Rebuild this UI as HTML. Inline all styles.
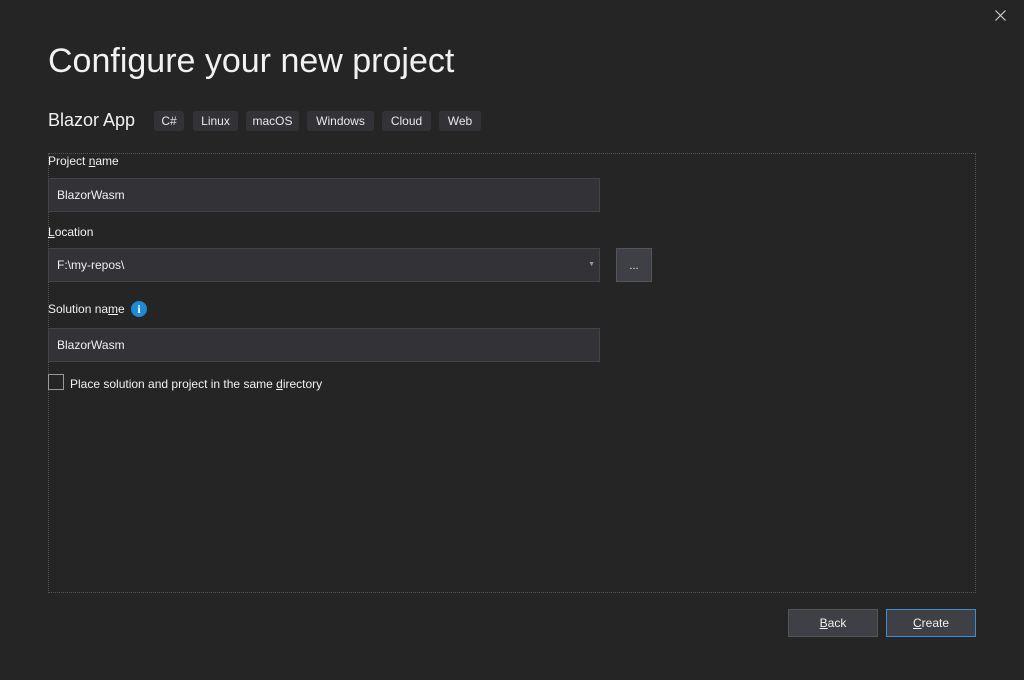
<!DOCTYPE html>
<html><head><style>
body{margin:0;width:1024px;height:680px;background:#252526;font-family:"Liberation Sans",sans-serif;color:#f1f1f1;position:relative;overflow:hidden}
.a{position:absolute}
h1{position:absolute;left:48px;top:42px;margin:0;font-weight:normal;font-size:34px;color:#f1f1f1}
.tag{position:absolute;top:111px;height:20px;background:#333337;border-radius:3px;font-size:12px;line-height:20px;text-align:center;color:#e8e8e8}
.lbl{position:absolute;left:48px;font-size:12px;color:#f1f1f1}
.inp{position:absolute;left:48px;width:550px;height:32px;background:#333337;border:1px solid #434346;font-size:12px;line-height:32px;text-indent:8px;color:#f1f1f1}
.btn{position:absolute;top:609px;width:88px;height:26px;background:#3f3f46;border:1px solid #555;font-size:12px;line-height:26px;text-align:center}
</style></head><body>
<svg class="a" style="left:995px;top:10px" width="11" height="11"><path d="M0.5 0.5L10.5 10.5M10.5 0.5L0.5 10.5" stroke="#ccc" stroke-width="1.2"/></svg>
<h1>Configure your new project</h1>
<div class="a" style="left:48px;top:110px;font-size:18px">Blazor App</div>
<div class="tag" style="left:154px;width:30px">C#</div>
<div class="tag" style="left:193px;width:45px">Linux</div>
<div class="tag" style="left:246px;width:53px">macOS</div>
<div class="tag" style="left:307px;width:67px">Windows</div>
<div class="tag" style="left:382px;width:49px">Cloud</div>
<div class="tag" style="left:439px;width:42px">Web</div>
<div class="a" style="left:48px;top:153px;width:926px;height:438px;border:1px dotted #555"></div>
<div class="lbl" style="top:154px">Project <u>n</u>ame</div>
<div class="inp" style="top:178px">BlazorWasm</div>
<div class="lbl" style="top:225px"><u>L</u>ocation</div>
<div class="inp" style="top:248px">F:\my-repos\<span class="a" style="right:4px;top:0;font-size:7px;color:#999">▼</span></div>
<div class="a" style="left:616px;top:248px;width:34px;height:32px;background:#3f3f46;border:1px solid #555;font-size:11px;text-align:center;line-height:34px">...</div>
<div class="lbl" style="top:302px">Solution na<u>m</u>e</div>
<div class="a" style="left:131px;top:301px;width:16px;height:16px;border-radius:50%;background:#1e8ad6;border:0;color:#fff;font-size:12px;font-weight:bold;text-align:center;line-height:16px;font-family:'Liberation Serif',serif">i</div>
<div class="inp" style="top:328px">BlazorWasm</div>
<div class="a" style="left:48px;top:374px;width:14px;height:14px;border:1px solid #999"></div>
<div class="lbl" style="left:70px;top:377px">Place solution and project in the same <u>d</u>irectory</div>
<div class="btn" style="left:788px"><u>B</u>ack</div>
<div class="btn" style="left:886px;border-color:#3b8fd4"><u>C</u>reate</div>
</body></html>
